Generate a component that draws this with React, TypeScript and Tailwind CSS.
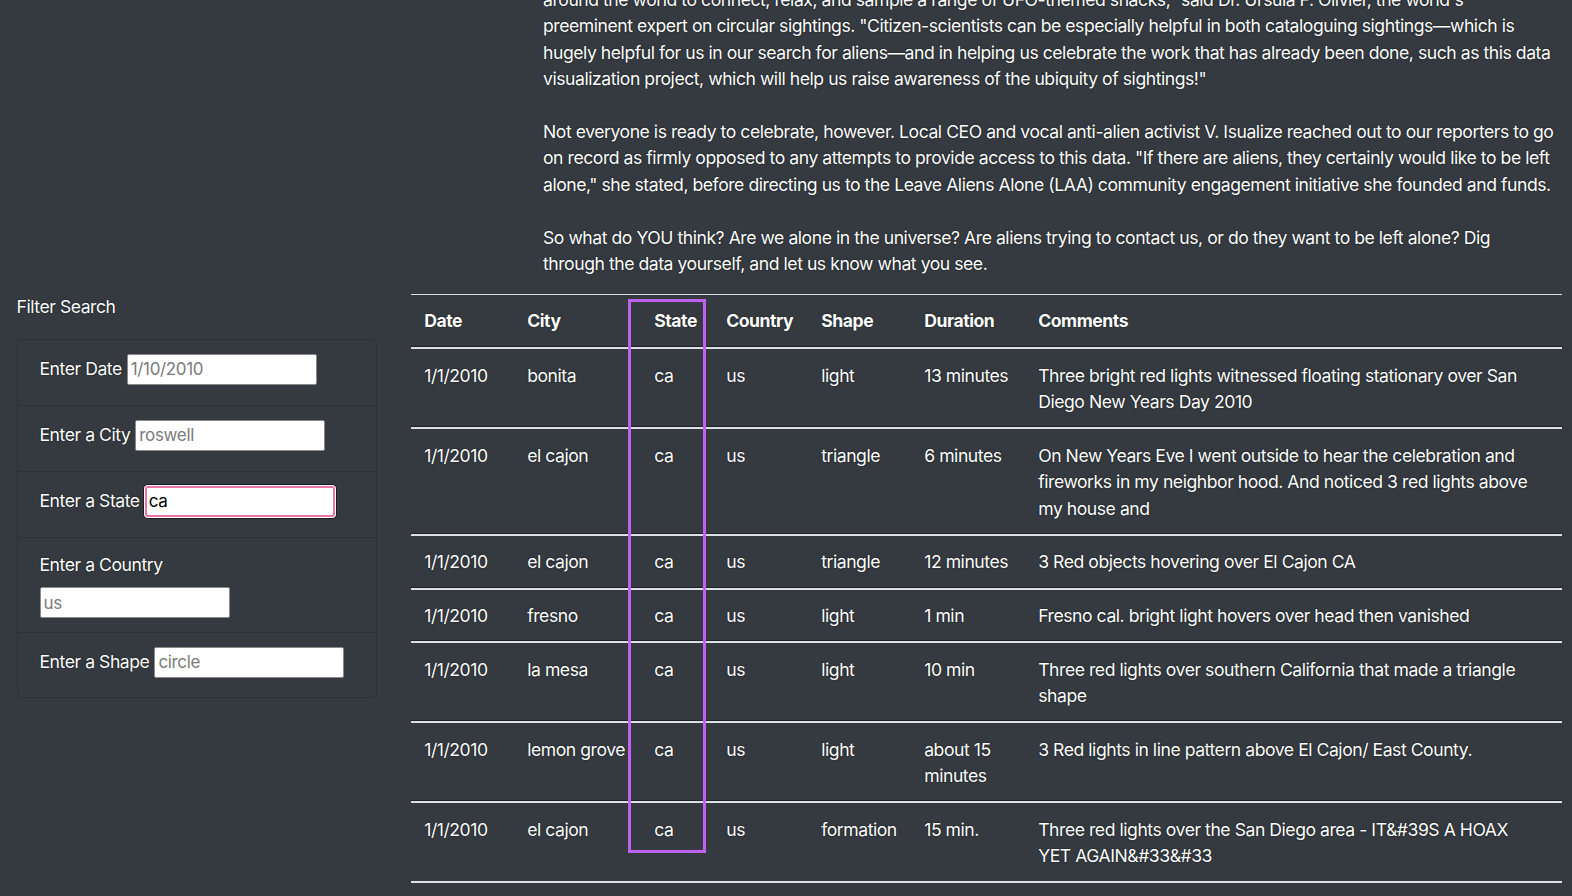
import React from "react";

const rows: { date: string; city: string; state: string; country: string; shape: string; duration: React.ReactNode; comments: React.ReactNode }[] = [
  { date: "1/1/2010", city: "bonita", state: "ca", country: "us", shape: "light", duration: "13 minutes", comments: <>Three bright red lights witnessed floating stationary over San<br />Diego New Years Day 2010</> },
  { date: "1/1/2010", city: "el cajon", state: "ca", country: "us", shape: "triangle", duration: "6 minutes", comments: <>On New Years Eve I went outside to hear the celebration and<br />fireworks in my neighbor hood. And noticed 3 red lights above<br />my house and</> },
  { date: "1/1/2010", city: "el cajon", state: "ca", country: "us", shape: "triangle", duration: "12 minutes", comments: "3 Red objects hovering over El Cajon CA" },
  { date: "1/1/2010", city: "fresno", state: "ca", country: "us", shape: "light", duration: "1 min", comments: "Fresno cal. bright light hovers over head then vanished" },
  { date: "1/1/2010", city: "la mesa", state: "ca", country: "us", shape: "light", duration: "10 min", comments: <>Three red lights over southern California that made a triangle<br />shape</> },
  { date: "1/1/2010", city: "lemon grove", state: "ca", country: "us", shape: "light", duration: <>about 15<br />minutes</>, comments: "3 Red lights in line pattern above El Cajon/ East County." },
  { date: "1/1/2010", city: "el cajon", state: "ca", country: "us", shape: "formation", duration: "15 min.", comments: <>Three red lights over the San Diego area - IT&amp;#39S A HOAX<br />YET AGAIN&amp;#33&amp;#33</> },
];

const inputCls =
  "w-[190px] h-[31px] bg-white border border-[#8a8a8a] rounded-[2px] px-[3px] text-[17px] tracking-[-0.02em] text-black placeholder:text-[#7b7b7b] outline-none font-['Inter']";

export default function App() {
  return (
    <div className="w-[1572px] h-[896px] overflow-hidden bg-[#343a40] text-white font-['Inter',sans-serif] text-[17.6px] leading-[26.4px] tracking-[-0.026em] [text-shadow:0_0_1.5px_rgba(0,0,0,0.85)]">
      <div className="mt-[-13px]">
        <div className="pl-[543px] pr-[10px] pb-[17px]">
          <p className="mb-[26.4px] whitespace-nowrap">
            around the world to connect, relax, and sample a range of UFO-themed snacks," said Dr. Ursula F. Olivier, the world's
            <br />
            preeminent expert on circular sightings. "Citizen-scientists can be especially helpful in both cataloguing sightings—which is
            <br />
            hugely helpful for us in our search for aliens—and in helping us celebrate the work that has already been done, such as this data
            <br />
            visualization project, which will help us raise awareness of the ubiquity of sightings!"
          </p>
          <p className="mb-[26.4px] whitespace-nowrap">
            Not everyone is ready to celebrate, however. Local CEO and vocal anti-alien activist V. Isualize reached out to our reporters to go
            <br />
            on record as firmly opposed to any attempts to provide access to this data. "If there are aliens, they certainly would like to be left
            <br />
            alone," she stated, before directing us to the Leave Aliens Alone (LAA) community engagement initiative she founded and funds.
          </p>
          <p className="whitespace-nowrap">
            So what do YOU think? Are we alone in the universe? Are aliens trying to contact us, or do they want to be left alone? Dig
            <br />
            through the data yourself, and let us know what you see.
          </p>
        </div>

        <div className="flex">
          <div className="w-[393px] shrink-0 px-[16.5px]">
            <div className="h-[26.4px]">Filter Search</div>
            <ul className="mt-[18px] border border-[#2c3136] rounded-[4px]">
              <li className="h-[65px] px-[22px] pt-[14px] flex items-start">
                <div className="h-[31px] flex items-center gap-[5px]">
                  <label>Enter Date</label>
                  <input className={inputCls} placeholder="1/10/2010" />
                </div>
              </li>
              <li className="h-[66px] px-[22px] pt-[14px] flex items-start border-t border-[#2c3136]">
                <div className="h-[31px] flex items-center gap-[5px]">
                  <label>Enter a City</label>
                  <input className={inputCls} placeholder="roswell" />
                </div>
              </li>
              <li className="h-[66px] px-[22px] pt-[14px] flex items-start border-t border-[#2c3136]">
                <div className="h-[31px] flex items-center gap-[5px]">
                  <label>Enter a State</label>
                  <input
                    className="w-[190px] h-[31px] bg-white border-2 border-[#ea74a6] rounded-[3px] px-[2px] text-[17px] tracking-[-0.02em] text-black outline-none shadow-[0_0_0_1px_#fff,0_0_0_2px_#1c1c1c] font-['Inter'] caret-black"
                    defaultValue="ca"
                  />
                </div>
              </li>
              <li className="h-[95px] px-[22px] pt-[14px] border-t border-[#2c3136]">
                <label className="block">Enter a Country</label>
                <input className={inputCls + " mt-[9px] block"} placeholder="us" />
              </li>
              <li className="h-[65px] px-[22px] pt-[14px] flex items-start border-t border-[#2c3136]">
                <div className="h-[31px] flex items-center gap-[5px]">
                  <label>Enter a Shape</label>
                  <input className={inputCls} placeholder="circle" />
                </div>
              </li>
            </ul>
          </div>

          <div className="flex-1 pl-[18px] pr-[10px]">
            <div className="relative">
              <table className="w-full table-fixed border-separate border-spacing-0 text-left">
                <colgroup>
                  <col className="w-[103px]" />
                  <col className="w-[127px]" />
                  <col className="w-[72px]" />
                  <col className="w-[95px]" />
                  <col className="w-[103px]" />
                  <col className="w-[114px]" />
                  <col />
                </colgroup>
                <thead>
                  <tr>
                    {["Date", "City", "State", "Country", "Shape", "Duration", "Comments"].map((h) => (
                      <th
                        key={h}
                        className="font-bold px-[13.2px] pt-[12.2px] pb-[13.2px] border-t-[1.5px] border-[#dde1e5] align-top whitespace-nowrap"
                      >
                        {h}
                      </th>
                    ))}
                  </tr>
                </thead>
                <tbody>
                  {rows.map((r, i) => {
                    const last = i === rows.length - 1;
                    const td =
                      "align-top px-[13.2px] pt-[13.4px] pb-[11.9px] leading-[26.4px] border-t-2 border-[#dde1e5] shadow-[0_-1px_0_#1e2226] whitespace-nowrap" +
                      (last ? " border-b-2" : "");
                    return (
                      <tr key={i}>
                        <td className={td}>{r.date}</td>
                        <td className={td}>{r.city}</td>
                        <td className={td}>{r.state}</td>
                        <td className={td}>{r.country}</td>
                        <td className={td}>{r.shape}</td>
                        <td className={td}>{r.duration}</td>
                        <td className={td}>{r.comments}</td>
                      </tr>
                    );
                  })}
                </tbody>
              </table>
              <div className="absolute left-[217px] top-[5px] w-[78px] h-[554px] border-[3px] border-[#c062f1] pointer-events-none" />
            </div>
          </div>
        </div>
      </div>
    </div>
  );
}
